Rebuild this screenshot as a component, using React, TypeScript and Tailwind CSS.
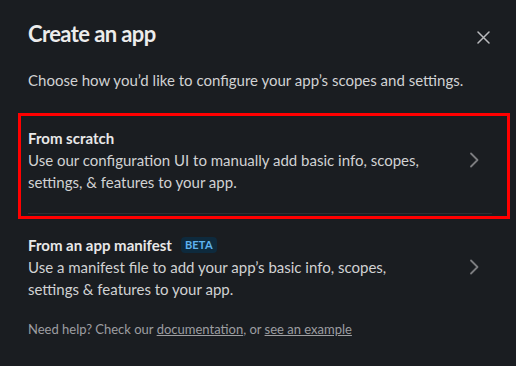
import React from "react";

function Chevron() {
  return (
    <svg width="11" height="16" viewBox="0 0 11 16" fill="none" className="shrink-0">
      <path d="M2 1.5 L8.5 8 L2 14.5" stroke="#7c7d80" strokeWidth="1.8" strokeLinecap="round" strokeLinejoin="round" />
    </svg>
  );
}

export default function App() {
  return (
    <div
      className="w-[516px] h-[366px] bg-[#1a1d21] text-[#d1d2d3] overflow-hidden"
      style={{ fontFamily: "Lato, 'Open Sans', sans-serif" }}
    >
      <div className="flex items-start justify-between pl-[28px] pr-[26px] pt-[19px]">
        <h1 className="text-[22px] leading-[30px] font-bold tracking-[-0.6px] text-[#ececec]">Create an app</h1>
        <button className="mt-[11px] w-[14px] h-[14px] flex items-center justify-center">
          <svg width="13" height="13" viewBox="0 0 13 13" fill="none">
            <path d="M1 1 L12 12 M12 1 L1 12" stroke="#b9babd" strokeWidth="1.5" strokeLinecap="round" />
          </svg>
        </button>
      </div>
      <p className="mt-[20px] pl-[28px] text-[15px] leading-[22px] text-[#d1d2d3]">
        Choose how you’d like to configure your app’s scopes and settings.
      </p>

      <div className="mt-[22px] ml-[18px] w-[492px] border-[3px] border-[#ff0000] pt-[11px] pl-[7px] pr-[15px] pb-[2px]">
        <div className="flex items-center border-b border-[#2c2e33] pb-[20px]">
          <div className="flex-1 text-[15px] leading-[22px]">
            <div className="font-bold text-[#e8e8e8]">From scratch</div>
            <div>Use our configuration UI to manually add basic info, scopes,</div>
            <div>settings, &amp; features to your app.</div>
          </div>
          <div className="mr-[12px]">
            <Chevron />
          </div>
        </div>
      </div>

      <div className="ml-[28px] w-[464px] pt-[15px] flex items-center">
        <div className="flex-1 text-[15px] leading-[22px]">
          <div className="flex items-center font-bold text-[#e8e8e8]">
            <span>From an app manifest</span>
            <span className="ml-[9px] h-[16px] px-[4px] rounded-[4px] bg-[#0e2a3d] text-[#5fb2ee] text-[11px] leading-[16px] font-bold tracking-[0.2px]">
              BETA
            </span>
          </div>
          <div>Use a manifest file to add your app’s basic info, scopes,</div>
          <div>settings &amp; features to your app.</div>
        </div>
        <div className="mr-[12px]">
          <Chevron />
        </div>
      </div>

      <p className="mt-[20px] pl-[28px] text-[13px] leading-[18px] text-[#9d9ea1]">
        Need help? Check our <span className="underline">documentation</span>, or{" "}
        <span className="underline">see an example</span>
      </p>
    </div>
  );
}
